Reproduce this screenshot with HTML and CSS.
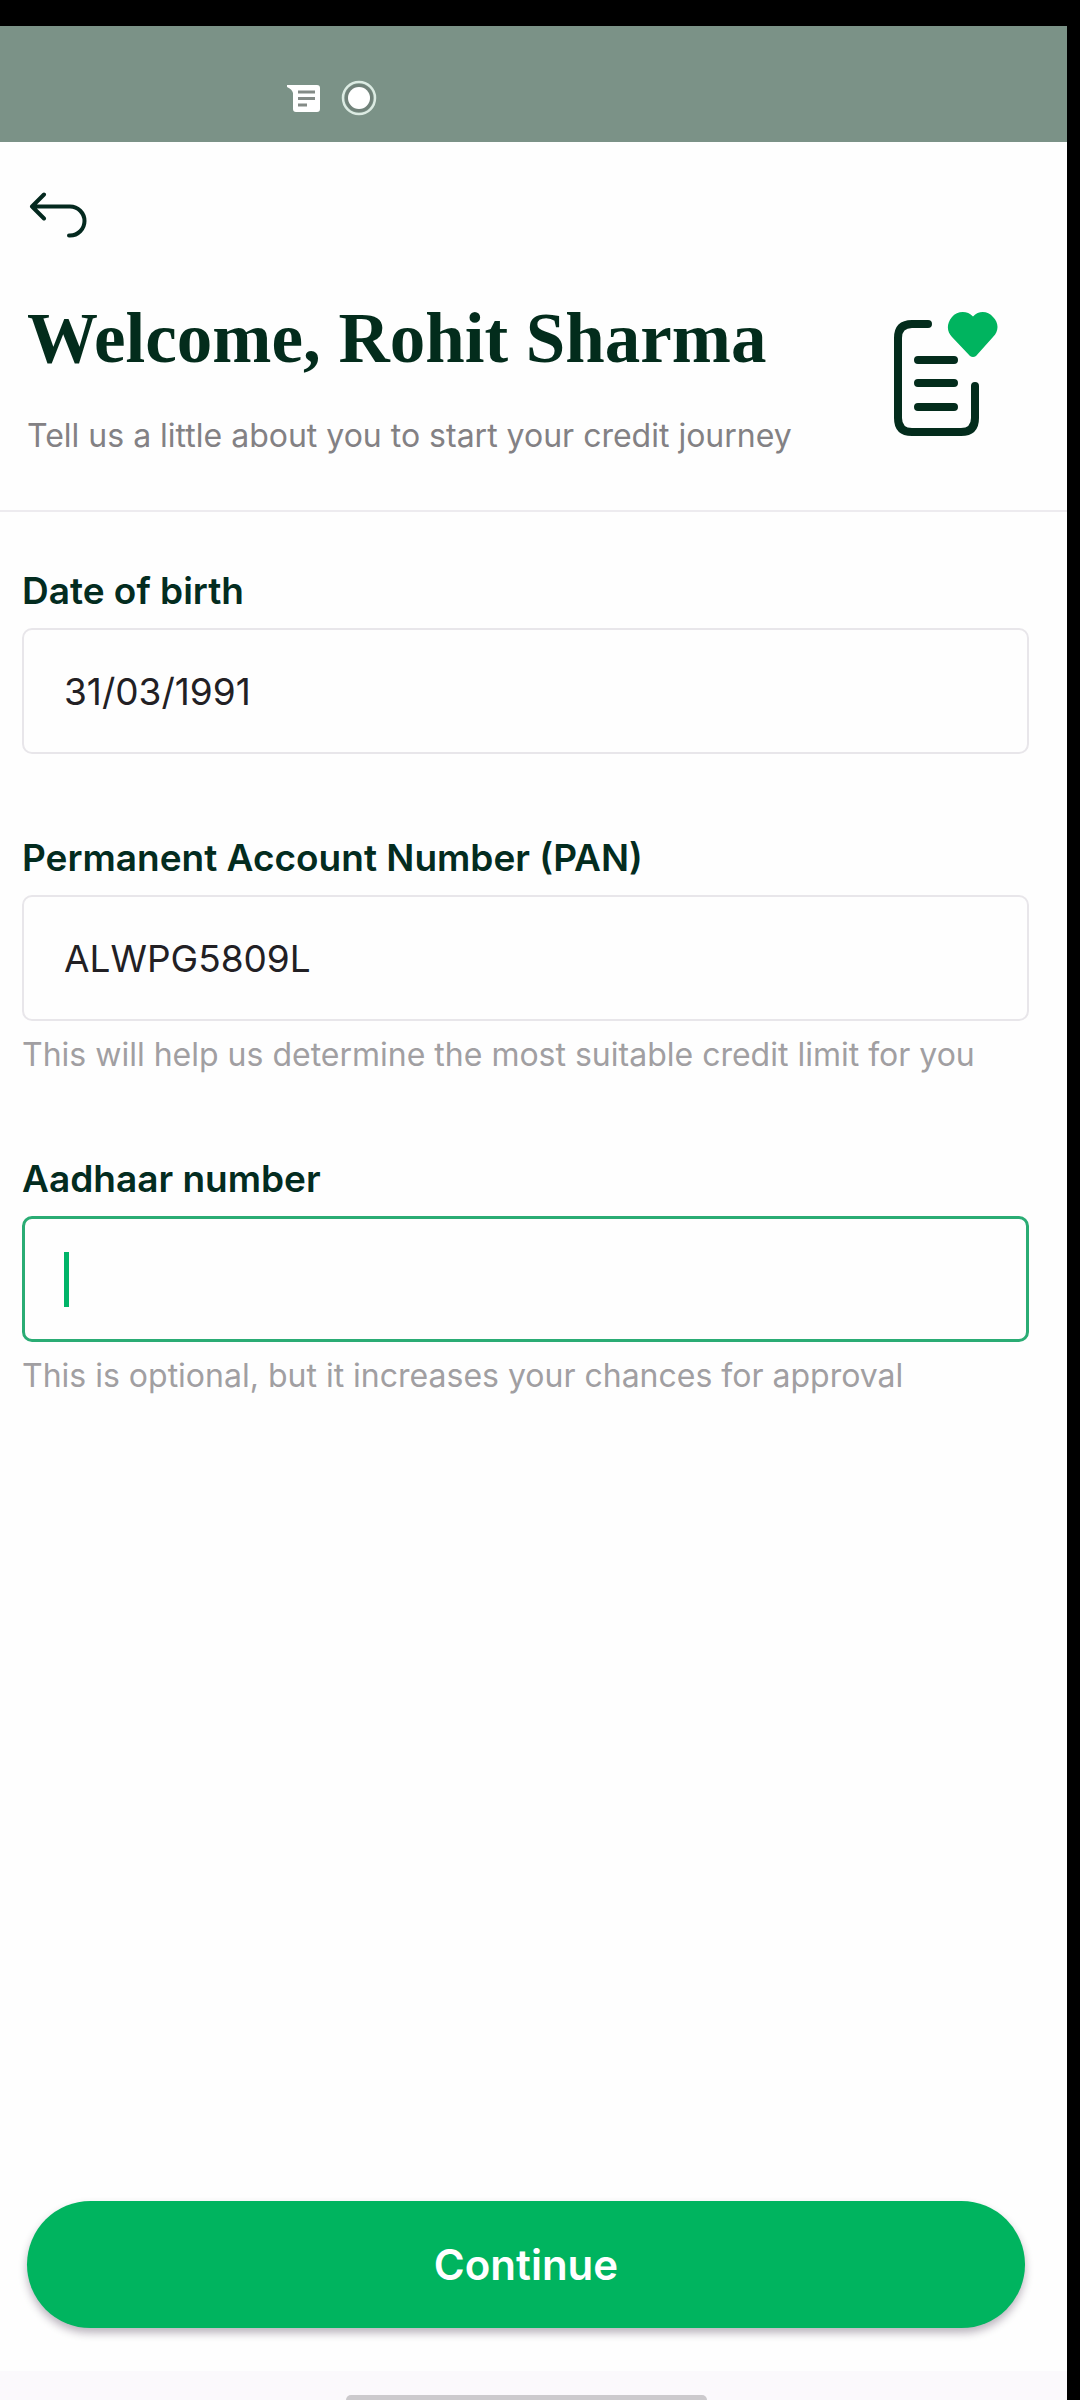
FILE: index.html
```html
<!DOCTYPE html>
<html lang="en">
<head>
<meta charset="utf-8">
<meta name="viewport" content="width=device-width, initial-scale=1">
<title>Welcome, Rohit Sharma</title>
<link rel="stylesheet" href="styles.css">
</head>
<body>
<div class="screen">
  <div class="status-bar">
    <svg class="status-icon" viewBox="0 0 34 36" width="34" height="36" aria-hidden="true">
      <path fill="#fff" d="M0 5H30Q33 5 33 8V29Q33 32 30 32H9Q6 32 6 29V13Q5 9 0 7Z"/>
      <path stroke="#848b87" stroke-width="3" d="M11 12H28M11 18.500H28M11 25H20"/>
    </svg>
    <svg class="status-icon" viewBox="0 0 36 36" width="36" height="36" aria-hidden="true">
      <circle cx="18" cy="18" r="16" fill="none" stroke="#dcebe3" stroke-width="2.500"/>
      <circle cx="18" cy="18" r="12.500" fill="none" stroke="#71827a" stroke-width="3"/>
      <circle cx="18" cy="18" r="11" fill="#fff"/>
    </svg>
  </div>

  <header class="header">
    <button class="back" type="button" aria-label="Back">
      <svg viewBox="0 0 58 48" width="58" height="48" aria-hidden="true">
        <path fill="none" stroke="#04291f" stroke-width="4" stroke-linecap="round" stroke-linejoin="round" d="M15 2.500 3 14.500 15 26.500M3 14.500H41A14.500 14.500 0 0 1 41 43.500H40"/>
      </svg>
    </button>
    <div class="intro">
      <div class="intro-text">
        <h1 class="title">Welcome, Rohit Sharma</h1>
        <p class="subtitle">Tell us a little about you to start your credit journey</p>
      </div>
      <svg class="intro-icon" viewBox="0 0 104 124" width="104" height="124" aria-hidden="true">
        <g fill="none" stroke="#032c1c" stroke-width="8" stroke-linecap="round">
          <path d="M34 12H18Q4 12 4 26V106Q4 120 18 120H67Q81 120 81 106V74"/>
          <path d="M24 48H60M24 71H60M24 95H60"/>
        </g>
        <path fill="#00b45f" d="M79 4.500C73-2 63-1 58 5C52 12 53 20 58 25L76 44Q79 46 82 44L99 25C105 19 105 11 99 5C94-1 85-2 79 4.500Z"/>
      </svg>
    </div>
  </header>

  <form class="form">
    <div class="field">
      <label class="label" for="dob">Date of birth</label>
      <div class="control"><input class="input" id="dob" type="text" value="31/03/1991"></div>
    </div>
    <div class="field">
      <label class="label" for="pan">Permanent Account Number (PAN)</label>
      <div class="control"><input class="input" id="pan" type="text" value="ALWPG5809L" aria-describedby="pan-help"></div>
      <p class="help" id="pan-help">This will help us determine the most suitable credit limit for you</p>
    </div>
    <div class="field">
      <label class="label" for="aadhaar">Aadhaar number</label>
      <div class="control"><input class="input input-active" id="aadhaar" type="text" aria-describedby="aadhaar-help"><span class="caret"></span></div>
      <p class="help" id="aadhaar-help">This is optional, but it increases your chances for approval</p>
    </div>
    <button class="continue" type="submit">Continue</button>
  </form>

  <div class="nav-bar"><span class="handle"></span></div>
</div>
</body>
</html>
```
FILE: styles.css
```css
* {
  box-sizing: border-box;
}

body {
  margin: 0;
  background: #000;
  font-family: Inter, "Liberation Sans", sans-serif;
  font-optical-sizing: none;
}

.screen {
  display: flex;
  flex-direction: column;
  min-height: 100vh;
  border-top: 26px solid #000;
  border-right: 13px solid #000;
  background: #fefefe;
}

.status-bar {
  display: flex;
  align-items: flex-end;
  gap: 20px;
  height: 116px;
  padding: 0 287px 26px;
  background: #7b9287;
}

.header {
  padding: 50px 69px 0 27px;
  border-bottom: 2px solid #edebef;
}

.back {
  display: block;
  padding: 0;
  border: 0;
  background: none;
}

.back svg {
  display: block;
  margin-left: 2px;
}

.intro {
  display: flex;
  justify-content: space-between;
  align-items: flex-start;
  padding: 58px 0 54px;
}

.intro-icon {
  flex: none;
  margin-top: 14px;
}

.title {
  margin: 0;
  color: #032c1c;
  font: bold 71px/80px "Liberation Serif", serif;
  white-space: nowrap;
}

.subtitle {
  margin: 38px 0 0;
  color: #838184;
  font-size: 32px;
  line-height: 40px;
  white-space: nowrap;
}

.form {
  display: flex;
  flex: 1;
  flex-direction: column;
  gap: 82px;
  padding: 57px 38px 43px 22px;
}

.label {
  display: block;
  margin-bottom: 15px;
  color: #032c1f;
  font-size: 37px;
  font-weight: 600;
  line-height: 44px;
}

.control {
  position: relative;
}

.input {
  display: block;
  width: 100%;
  height: 126px;
  padding: 0 40px;
  border: 2px solid #e8e6ea;
  border-radius: 10px;
  outline: 0;
  background: transparent;
  color: #222024;
  font: 400 37px/44px Inter, "Liberation Sans", sans-serif;
  font-optical-sizing: none;
}

.input-active {
  border: 3px solid #2aac74;
}

.caret {
  position: absolute;
  top: 36px;
  left: 42px;
  width: 5px;
  height: 55px;
  background: #00b468;
}

.help {
  margin: 14px 0 0;
  color: #a19fa2;
  font-size: 32px;
  line-height: 40px;
}

.continue {
  height: 127px;
  margin: auto 4px 0 5px;
  border: 0;
  border-radius: 64px;
  background: #00b45f;
  box-shadow: 0 5px 8px rgba(30, 10, 40, 0.3);
  color: #fff;
  font: 600 42px/48px Inter, "Liberation Sans", sans-serif;
  font-optical-sizing: none;
}

.nav-bar {
  display: flex;
  align-items: flex-end;
  justify-content: center;
  height: 29px;
  padding-right: 15px;
  background: #fbf9fc;
}

.handle {
  width: 361px;
  height: 5px;
  border-radius: 5px 5px 0 0;
  background: #cccacd;
}
```
